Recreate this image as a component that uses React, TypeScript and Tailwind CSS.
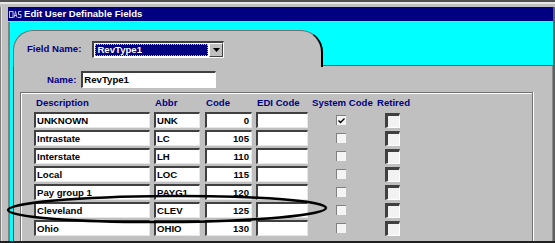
import React from "react";

const rows = [
  { d: "UNKNOWN", a: "UNK", c: "0", sys: true },
  { d: "Intrastate", a: "LC", c: "105" },
  { d: "Interstate", a: "LH", c: "110" },
  { d: "Local", a: "LOC", c: "115" },
  { d: "Pay group 1", a: "PAYG1", c: "120" },
  { d: "Cleveland", a: "CLEV", c: "125" },
  { d: "Ohio", a: "OHIO", c: "130" },
];

function Field({ w, text, right }: { w: string; text?: string; right?: boolean }) {
  return (
    <div
      className={`${w} h-[16px] bg-white border-t-2 border-l-2 border-t-[#404040] border-l-[#404040] border-b border-r border-b-[#e8e8e8] border-r-[#e8e8e8] flex items-center text-[9.6px] font-bold text-black leading-none ${right ? "justify-end pr-[2px]" : "pl-[1px]"}`}
    >
      {text}
    </div>
  );
}

export default function App() {
  return (
    <div
      className="w-[555px] h-[243px] bg-[#c0c0c0] flex flex-col overflow-hidden relative"
      style={{ fontFamily: '"Liberation Sans", Arial, sans-serif' }}
    >
      {/* top frame */}
      <div className="h-[2px] bg-[#505050] shrink-0" />
      <div className="h-[2px] bg-[#e6e6e6] shrink-0" />
      <div className="h-[3px] bg-[#c0c0c0] shrink-0" />
      <div className="flex flex-1 min-h-0">
        {/* left frame */}
        <div className="w-[8px] flex shrink-0">
          <div className="w-[1px] bg-[#808080]" />
          <div className="w-[1px] bg-[#e6e6e6]" />
          <div className="flex-1 bg-[#c0c0c0]" />
        </div>
        <div className="flex-1 flex flex-col min-w-0">
          {/* title bar */}
          <div className="h-[14px] bg-[#000080] flex items-center shrink-0">
            <svg width="13" height="9" viewBox="0 0 13 9" className="ml-[1px] mr-[2px]">
              <rect x="0" y="0" width="13" height="9" fill="#000080" />
              <rect x="0.5" y="1.5" width="3.5" height="6" fill="none" stroke="#c0c0ff" strokeWidth="1" />
              <path d="M5 7.5 L6.5 1.5 L8 7.5 M5.5 5.5 H7.5" fill="none" stroke="#c0c0ff" strokeWidth="1" />
              <path d="M12.5 1.5 H9.5 V4.5 H12 V7.5 H9" fill="none" stroke="#c0c0ff" strokeWidth="1" />
            </svg>
            <span className="text-white text-[9.6px] font-bold leading-none">Edit User Definable Fields</span>
          </div>
          <div className="h-[1px] bg-[#c0c0c0] shrink-0" />
          {/* client */}
          <div className="flex-1 flex min-h-0">
            <div className="w-[2px] bg-[#808080] shrink-0" />
            <div className="flex-1 bg-[#00ffff] flex flex-col pl-[3px] min-w-0">
              {/* tab area */}
              <div className="h-[44px] flex items-end shrink-0">
                <div className="w-[310px] h-[37px] bg-[#c0c0c0] rounded-tl-[20px] rounded-tr-[22px] border-t border-l border-[#707070] border-r-2 border-r-black flex items-center pl-[13px] -mb-[1px] relative z-10">
                  <span className="text-[#000080] text-[9.6px] font-bold leading-none mr-[11px]">Field Name:</span>
                  <div className="w-[132px] h-[17px] border-t-2 border-l-2 border-t-[#404040] border-l-[#404040] border-b border-r border-b-white border-r-white bg-white flex items-stretch">
                    <div className="flex-1 bg-[#000080] m-[1px] flex items-center pl-[1px] border border-dotted border-[#c0c0c0]">
                      <span className="text-white text-[9.6px] font-bold leading-none">RevType1</span>
                    </div>
                    <div className="w-[14px] bg-[#c0c0c0] border-t border-l border-white border-r border-b border-r-[#404040] border-b-[#404040] flex items-center justify-center">
                      <svg width="7" height="4" viewBox="0 0 7 4">
                        <path d="M0 0 H7 L3.5 4 Z" fill="#000" />
                      </svg>
                    </div>
                  </div>
                </div>
                <div className="flex-1 h-[1px] bg-[#207070]" />
              </div>
              {/* panel */}
              <div className="flex-1 bg-[#c0c0c0] border-l border-[#404040] border-r border-r-[#8a8a8a] flex flex-col min-h-0">
                <div className="flex items-center mt-[5px] h-[17px] shrink-0">
                  <span className="ml-[33px] text-[#000080] text-[9.6px] font-bold leading-none mr-[5px]">Name:</span>
                  <div className="w-[135px] h-[17px] bg-white border-t-2 border-l-2 border-t-[#404040] border-l-[#404040] border-b border-r border-b-white border-r-white flex items-center pl-[1px] text-[9.6px] font-bold leading-none text-black">
                    RevType1
                  </div>
                </div>
                {/* group box */}
                <div className="ml-[6px] mt-[4px] w-[513px] flex-1 border-t border-l border-r border-[#707070] shadow-[inset_1px_1px_0_#ffffff,1px_0_0_#ffffff] pl-[13px] pt-[4px] min-h-0">
                  <div className="flex h-[12px] items-center text-[#000080] text-[9.6px] font-bold leading-none">
                    <div className="w-[121px] pl-[2px]">Description</div>
                    <div className="w-[51px]">Abbr</div>
                    <div className="w-[51px]">Code</div>
                    <div className="w-[55px]">EDI Code</div>
                    <div className="w-[65px]">System Code</div>
                    <div>Retired</div>
                  </div>
                  <div className="flex flex-col gap-[2px] mt-[3px]">
                    {rows.map((r) => (
                      <div key={r.d} className="flex items-center h-[16px]">
                        <Field w="w-[116px]" text={r.d} />
                        <div className="w-[4px]" />
                        <Field w="w-[46px]" text={r.a} />
                        <div className="w-[5px]" />
                        <Field w="w-[47px]" text={r.c} right />
                        <div className="w-[4px]" />
                        <Field w="w-[52px]" />
                        <div className="w-[28px]" />
                        <div className="w-[10px] h-[10px] bg-[#f4f4f4] border-t border-l border-[#808080] flex items-center justify-center">
                          {r.sys && (
                            <svg width="7" height="6" viewBox="0 0 7 6">
                              <path d="M0.5 2.5 L2.5 4.5 L6.5 0.5" fill="none" stroke="#000" strokeWidth="1.4" />
                            </svg>
                          )}
                        </div>
                        <div className="w-[39px]" />
                        <div className="w-[15px] h-[15px] bg-[#f2f2f2] border-t-[3px] border-l-[3px] border-[#404040] border-r border-b border-r-white border-b-white" />
                      </div>
                    ))}
                  </div>
                </div>
              </div>
            </div>
          </div>
        </div>
        {/* right frame */}
        <div className="w-[2px] bg-[#606060] shrink-0" />
      </div>
      <div className="h-[2px] bg-[#202020] shrink-0" />
      {/* hand-drawn ellipse annotation */}
      <svg className="absolute left-0 top-0 pointer-events-none" width="555" height="243" viewBox="0 0 555 243">
        <ellipse cx="167" cy="209" rx="159" ry="13" fill="none" stroke="#000" strokeWidth="2.5" transform="rotate(-0.4 167 209)" />
      </svg>
    </div>
  );
}
